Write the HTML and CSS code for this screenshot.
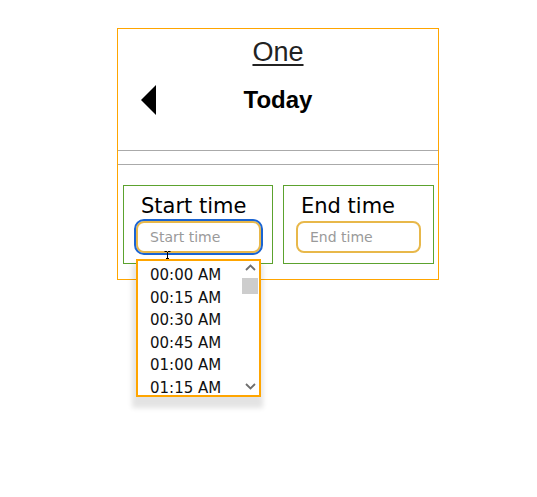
FILE: index.html
```html
<!DOCTYPE html>
<html>
<head>
<meta charset="utf-8">
<link rel="stylesheet" href="styles.css">
</head>
<body>
<div class="card">
  <div class="title"><a class="title-link">One</a></div>
  <div class="nav">
    <div class="nav-left"><span class="tri"></span></div>
    <div class="nav-text">Today</div>
    <div></div>
  </div>
  <div class="rule rule-a"></div>
  <div class="rule rule-b"></div>
  <div class="fields">
    <div class="field">
      <div class="label">Start time</div>
      <div class="input focus"><span class="ph">Start time</span></div>
      <svg class="ibeam" width="7" height="15" viewBox="0 0 7 15"><path d="M0.5 0.5h2.5M4 0.5h2.5M3.5 1v13M0.5 14.5h2.5M4 14.5h2.5M2 7.5h3" stroke="#000" stroke-width="1" fill="none"/></svg>
      <div class="dropdown">
        <div class="opt">00:00 AM</div>
        <div class="opt">00:15 AM</div>
        <div class="opt">00:30 AM</div>
        <div class="opt">00:45 AM</div>
        <div class="opt">01:00 AM</div>
        <div class="opt">01:15 AM</div>
        <div class="sbar">
          <svg class="arrow up" width="11" height="7" viewBox="0 0 11 7"><path d="M1 6L5.5 1.5L10 6" stroke="#6e6e6e" stroke-width="1.8" fill="none"/></svg>
          <div class="thumb"></div>
          <svg class="arrow down" width="11" height="7" viewBox="0 0 11 7"><path d="M1 1L5.5 5.5L10 1" stroke="#6e6e6e" stroke-width="1.8" fill="none"/></svg>
        </div>
      </div>
    </div>
    <div class="field">
      <div class="label">End time</div>
      <div class="input"><span class="ph">End time</span></div>
    </div>
  </div>
</div>
</body>
</html>
```
FILE: styles.css
```css
html, body { margin: 0; padding: 0; background: #fff; }
body { font-family: "Liberation Sans", Arial, sans-serif; min-height: 497px; }

.card {
  margin: 28px 0 0 117px;
  width: 320px;
  border: 1px solid #ffa500;
  padding-bottom: 15px;
}

.title {
  text-align: center;
  padding-top: 8px;
  font-size: 27px;
  line-height: 31px;
}
.title-link { color: #222; text-decoration: underline; text-decoration-thickness: 2px; text-underline-offset: 3px; }

.nav {
  display: grid;
  grid-template-columns: 1fr auto 1fr;
  align-items: center;
  margin-top: 17px;
  height: 28px;
}
.nav-left { padding-left: 23px; display: flex; align-items: center; }
.tri {
  width: 0; height: 0;
  border-top: 15px solid transparent;
  border-bottom: 15px solid transparent;
  border-right: 15px solid #000;
}
.nav-text { font-weight: bold; font-size: 24px; line-height: 28px; color: #000; }

.rule { border-top: 1px solid #aaa; }
.rule-a { margin-top: 37px; }
.rule-b { margin-top: 13px; }

.fields {
  display: grid;
  grid-template-columns: 150px 151px;
  column-gap: 10px;
  padding: 20px 0 0 5px;
}
.field {
  position: relative;
  border: 1px solid #5ca22e;
  padding: 6px 0 10px 12px;
  font-family: "DejaVu Sans", sans-serif;
}
.label {
  font-size: 21px;
  line-height: 29px;
  padding-left: 5px;
  color: #000;
}
.input {
  display: flex;
  align-items: center;
  box-sizing: border-box;
  width: 125px;
  height: 32px;
  padding-left: 12px;
  border: 2px solid #e8b84a;
  border-radius: 8px;
}
.input.focus { outline: 2px solid #1a64d2; outline-offset: 0; }
.ph { font-size: 14px; color: #9a9a9a; }

.ibeam { position: absolute; left: 40px; top: 65px; }

.dropdown {
  position: absolute;
  z-index: 2;
  left: 12px;
  top: 73px;
  width: 125px;
  height: 138px;
  box-sizing: border-box;
  border: 2px solid #ffa500;
  background: #fff;
  overflow: hidden;
  padding-top: 3px;
  box-shadow: -1px 8px 5px 3px rgba(0,0,0,0.11);
}
.opt {
  font-size: 15px;
  line-height: 22.6px;
  padding-left: 12px;
  color: #111;
  white-space: nowrap;
}
.sbar {
  position: absolute;
  right: 1px;
  top: 0;
  bottom: 0;
  width: 16px;
}
.arrow { position: absolute; left: 3px; }
.arrow.up { top: 3px; }
.arrow.down { bottom: 5px; }
.thumb {
  position: absolute;
  left: 0; right: 0;
  top: 17px;
  height: 16px;
  background: #cdcdcd;
}
```
